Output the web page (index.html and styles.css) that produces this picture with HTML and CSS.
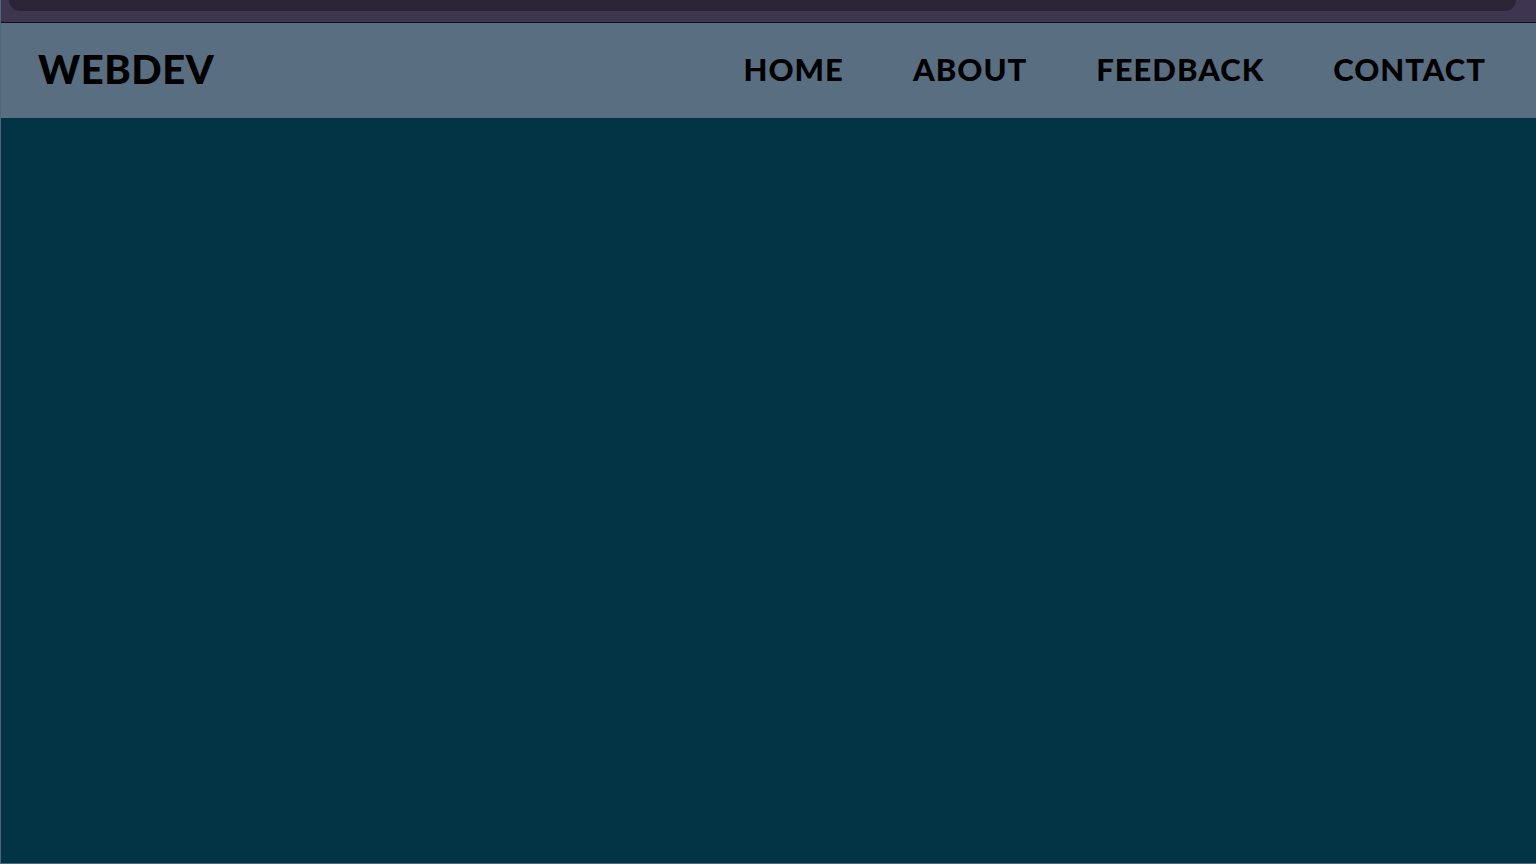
FILE: index.html
```html
<!DOCTYPE html>
<html lang="en">
<head>
    <meta charset="UTF-8">
    <meta name="viewport" content="width=device-width, initial-scale=1.0">
    <title>WebDev</title>
    <link rel="stylesheet" href="styles.css">
</head>
<body>
    <div class="tabbar">
        <div class="tab-strip"></div>
    </div>
    <header class="navbar">
        <div class="logo">WEBDEV</div>
        <nav class="nav-links">
            <a href="#">HOME</a>
            <a href="#">ABOUT</a>
            <a href="#">FEEDBACK</a>
            <a href="#">CONTACT</a>
        </nav>
    </header>
    <main class="content"></main>
</body>
</html>
```

FILE: styles.css
```css
html, body {
    height: 100%;
}
body {
    margin: 0;
    background-color: #023446;
    font-family: 'Lato', 'Open Sans', sans-serif;
    display: flex;
    flex-direction: column;
    border-left: 1px solid #4d6878;
    border-bottom: 1px solid #4d6878;
    box-sizing: border-box;
}
.tabbar {
    height: 22px;
    background-color: #3e3550;
    border-bottom: 1px solid #111;
}
.tab-strip {
    height: 11px;
    margin: 0 20px 0 8px;
    background-color: #2c2538;
    border-radius: 0 0 14px 14px;
}
.navbar {
    height: 95px;
    box-sizing: border-box;
    background-color: #5a6e82;
    display: flex;
    align-items: center;
    justify-content: space-between;
    padding: 0 50px 3px 37px;
}
.logo {
    font-size: 40px;
    font-weight: 900;
    color: #000;
    letter-spacing: 0.5px;
}
.nav-links {
    display: flex;
    gap: 69px;
}
.nav-links a {
    color: #000;
    text-decoration: none;
    font-size: 31px;
    font-weight: 900;
    letter-spacing: 1px;
}
.content {
    flex: 1;
}
```
